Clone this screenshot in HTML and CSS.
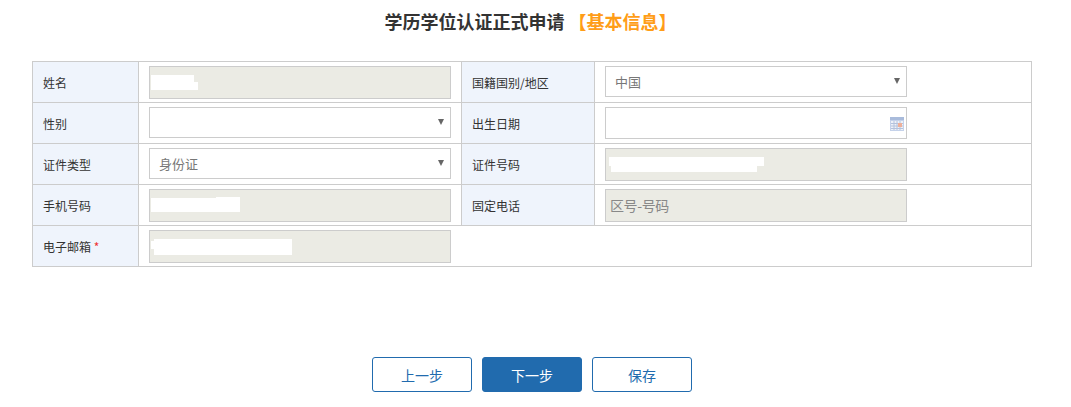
FILE: index.html
```html
<!DOCTYPE html>
<html lang="zh-CN">
<head>
<meta charset="utf-8">
<title>学历学位认证正式申请</title>
<link rel="stylesheet" href="styles.css">
</head>
<body>
<h1 class="title">学历学位认证正式申请 <span class="title-accent">【基本信息】</span></h1>
<table class="form">
  <colgroup><col class="c-label"><col class="c-field"><col class="c-label2"><col class="c-field2"></colgroup>
  <tr>
    <th>姓名</th>
    <td><div class="box disabled tall"><i class="mask m-name1"></i><i class="mask m-name2"></i></div></td>
    <th>国籍国别/地区</th>
    <td><div class="box select"><span class="val">中国</span><i class="caret"></i></div></td>
  </tr>
  <tr>
    <th>性别</th>
    <td><div class="box select"><i class="caret"></i></div></td>
    <th>出生日期</th>
    <td><div class="box date">
      <svg class="cal" viewBox="0 0 14 14" width="14" height="14" aria-hidden="true">
        <rect x="0" y="0" width="14" height="14" fill="#c5d2ea"/>
        <rect x="0" y="0" width="14" height="3" fill="#a9bbdb"/>
        <path d="M1 4h12v9H1z" fill="#eef2f9"/>
        <path d="M1 6.500h12M1 9h12M1 11.500h12M4 4v9M7 4v9M10 4v9" stroke="#b4c2dc" stroke-width="1" fill="none"/>
        <rect x="8" y="6" width="4" height="4" fill="#eeb09a"/>
      </svg>
    </div></td>
  </tr>
  <tr>
    <th>证件类型</th>
    <td><div class="box select"><span class="val">身份证</span><i class="caret"></i></div></td>
    <th>证件号码</th>
    <td><div class="box disabled tall"><i class="mask m-id1"></i><i class="mask m-id2"></i></div></td>
  </tr>
  <tr>
    <th>手机号码</th>
    <td><div class="box disabled tall"><i class="mask m-tel1"></i><i class="mask m-tel2"></i></div></td>
    <th>固定电话</th>
    <td><div class="box disabled tall"><span class="ph">区号-号码</span></div></td>
  </tr>
  <tr>
    <th>电子邮箱 <span class="req">*</span></th>
    <td class="no-right"><div class="box disabled tall"><i class="mask m-mail1"></i><i class="mask m-mail2"></i></div></td>
    <td class="blank" colspan="2"></td>
  </tr>
</table>
<div class="actions">
  <button class="btn" type="button">上一步</button>
  <button class="btn primary" type="button">下一步</button>
  <button class="btn" type="button">保存</button>
</div>
</body>
</html>
```
FILE: styles.css
```css
html, body { margin: 0; padding: 0; background: #fff; }
body {
  width: 1071px;
  height: 407px;
  overflow: hidden;
  font-family: "Noto Sans CJK SC", "Noto Sans", sans-serif;
  color: #333;
  padding-top: 8px;
  box-sizing: border-box;
}
.title {
  margin: 0 0 26px;
  height: 27px;
  line-height: 27px;
  font-size: 18px;
  font-weight: 700;
  text-align: center;
  color: #333;
  padding-right: 10px;
}
.title-accent { color: #ff9d17; }
.form {
  margin-left: 32px;
  width: 999px;
  table-layout: fixed;
  border-collapse: collapse;
}
.c-label { width: 106px; }
.c-field { width: 323px; }
.c-label2 { width: 133px; }
.c-field2 { width: 437px; }
.form tr { height: 41px; }
.form th, .form td {
  border: 1px solid #ccc;
  padding: 0;
  box-sizing: border-box;
}
.form th {
  background: #eff4fc;
  font-size: 12px;
  font-weight: 400;
  text-align: left;
  padding-left: 10px;
  color: #333;
}
.form td { padding-left: 10px; }
.form td.no-right { border-right: 0; }
.form td.blank { border-left: 0; }
.req { color: #e33; }
.box {
  position: relative;
  width: 302px;
  height: 31px;
  border: 1px solid #ccc;
  box-sizing: border-box;
  background: #fff;
  display: flex;
  align-items: center;
  font-size: 13px;
  color: #777;
}
.select { margin-bottom: 2px; }
.tall { height: 33px; }
.date { height: 32px; }
.disabled { background: #ebebe4; }
.val { padding-left: 9px; }
.ph { padding-left: 4px; font-size: 14px; color: #888; letter-spacing: -0.4px; }
.caret {
  position: absolute;
  right: 6px;
  top: 11px;
  width: 0;
  height: 0;
  border-left: 3px solid transparent;
  border-right: 3px solid transparent;
  border-top: 6px solid #666;
}
.cal { position: absolute; right: 2px; top: 9px; }
.mask { position: absolute; background: #fff; display: block; }
.m-name1 { left: 1px; top: 8px; width: 43px; height: 15px; }
.m-name2 { left: 1px; top: 15px; width: 47px; height: 8px; }
.m-id1 { left: 3px; top: 8px; width: 155px; height: 9px; }
.m-id2 { left: 5px; top: 14px; width: 146px; height: 9px; }
.m-tel1 { left: 1px; top: 8px; width: 65px; height: 14px; }
.m-tel2 { left: 66px; top: 7px; width: 24px; height: 15px; }
.m-mail1 { left: 1px; top: 10px; width: 140px; height: 8px; }
.m-mail2 { left: 4px; top: 8px; width: 138px; height: 16px; }
.actions {
  display: flex;
  justify-content: flex-start;
  gap: 10px;
  margin: 90px 0 0 372px;
}
.btn {
  width: 100px;
  height: 35px;
  padding: 0;
  border: 1px solid #216bae;
  border-radius: 3px;
  background: #fff;
  color: #216bae;
  font-family: "Noto Sans CJK SC", "Noto Sans", sans-serif;
  font-size: 14px;
}
.btn.primary { background: #216bae; color: #fff; }
```
